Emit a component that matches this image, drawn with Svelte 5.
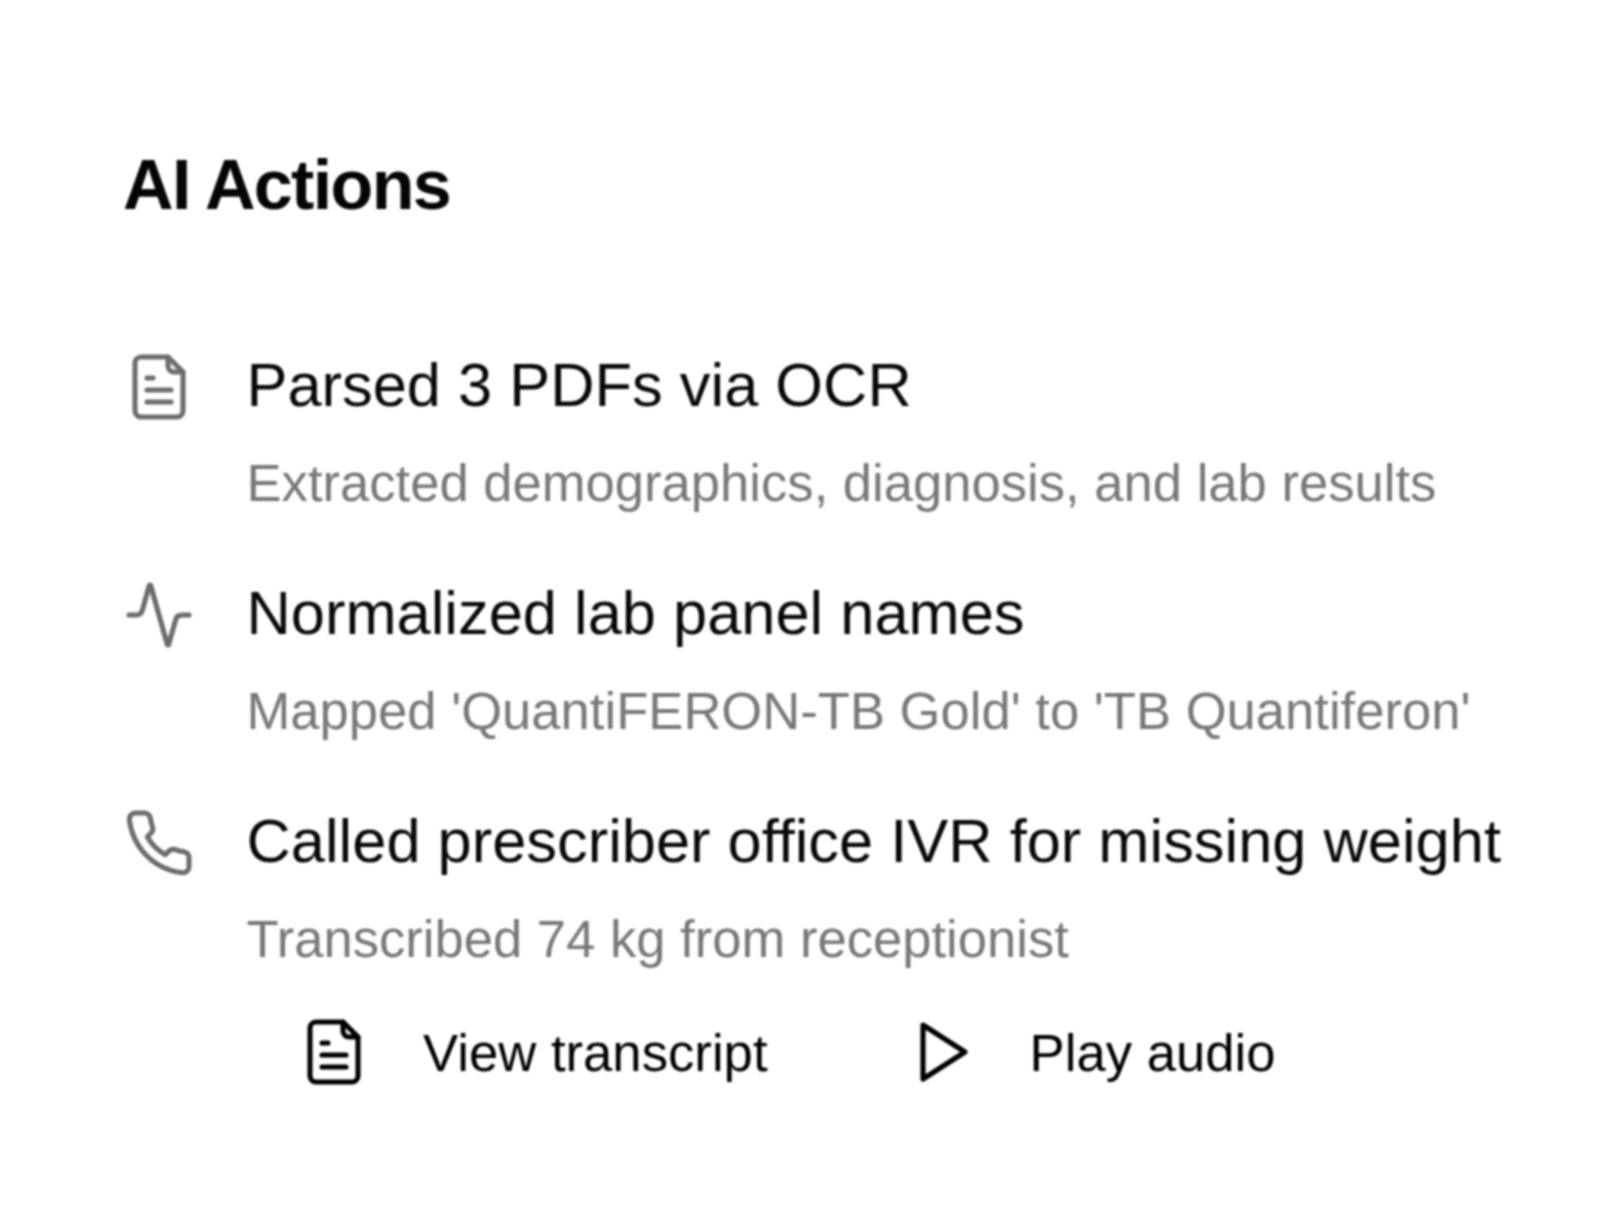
<script>
  const rows = [
    { icon: 'file', title: 'Parsed 3 PDFs via OCR', sub: 'Extracted demographics, diagnosis, and lab results' },
    { icon: 'pulse', title: 'Normalized lab panel names', sub: "Mapped 'QuantiFERON-TB Gold' to 'TB Quantiferon'" },
    { icon: 'phone', title: 'Called prescriber office IVR for missing weight', sub: 'Transcribed 74 kg from receptionist' }
  ];
</script>

{#snippet icon(name)}
  <svg class="icon" viewBox="0 0 24 24" fill="none" stroke="currentColor" stroke-width="1.7" stroke-linecap="round" stroke-linejoin="round">
    {#if name === 'file'}
      <path d="M15 2H6a2 2 0 0 0-2 2v16a2 2 0 0 0 2 2h12a2 2 0 0 0 2-2V7Z" />
      <path d="M15 2v3a2 2 0 0 0 2 2h3" />
      <path d="M10 9H8" /><path d="M16 13H8" /><path d="M16 17H8" />
    {:else if name === 'pulse'}
      <path d="M22 12h-2.48a2 2 0 0 0-1.93 1.46l-2.35 8.36a.25.25 0 0 1-.48 0L9.24 2.18a.25.25 0 0 0-.48 0l-2.35 8.36A2 2 0 0 1 4.49 12H2" />
    {:else if name === 'phone'}
      <path d="M22 16.92v3a2 2 0 0 1-2.18 2 19.79 19.79 0 0 1-8.63-3.07 19.5 19.5 0 0 1-6-6 19.79 19.79 0 0 1-3.07-8.67A2 2 0 0 1 4.11 2h3a2 2 0 0 1 2 1.72 12.84 12.84 0 0 0 .7 2.81 2 2 0 0 1-.45 2.11L8.09 9.91a16 16 0 0 0 6 6l1.27-1.27a2 2 0 0 1 2.11-.45 12.84 12.84 0 0 0 2.81.7A2 2 0 0 1 22 16.92z" />
    {:else}
      <polygon points="6 3 20 12 6 21 6 3" />
    {/if}
  </svg>
{/snippet}

<main class="panel">
  <h2>AI Actions</h2>
  <ul class="rows">
    {#each rows as row}
      <li class="row">
        <span class="glyph">{@render icon(row.icon)}</span>
        <div class="body">
          <div class="title">{row.title}</div>
          <div class="sub">{row.sub}</div>
        </div>
      </li>
    {/each}
  </ul>
  <div class="actions">
    <button class="action">{@render icon('file')}<span>View transcript</span></button>
    <button class="action">{@render icon('play')}<span>Play audio</span></button>
  </div>
</main>

<style>
  :global(body) { margin: 0; background: #fff; }
  .panel {
    box-sizing: border-box;
    width: 1620px;
    height: 1230px;
    padding: 146px 0 0 123px;
    font-family: "Liberation Sans", Arial, sans-serif;
    color: #111;
    filter: blur(0.8px);
  }
  h2 { margin: 0; font-size: 70px; line-height: 78px; font-weight: 700; letter-spacing: -1.65px; color: #050505; }
  .rows { list-style: none; margin: 125px 0 0; padding: 0; display: flex; flex-direction: column; gap: 58px; }
  .row { display: flex; gap: 51.5px; }
  .glyph { color: #6c6c6c; height: 72px; margin-top: 2px; }
  .icon { width: 72px; height: 72px; display: block; }
  .title { font-size: 61.4px; line-height: 72px; color: #080808; }
  .sub { font-size: 52.6px; line-height: 72px; margin-top: 26px; color: #777; }
  .actions { display: flex; gap: 137px; margin: 41px 0 0 175px; }
  .action { display: flex; align-items: center; gap: 53px; padding: 0; border: 0; background: none; font: inherit; font-size: 52.7px; color: #000; }
</style>
